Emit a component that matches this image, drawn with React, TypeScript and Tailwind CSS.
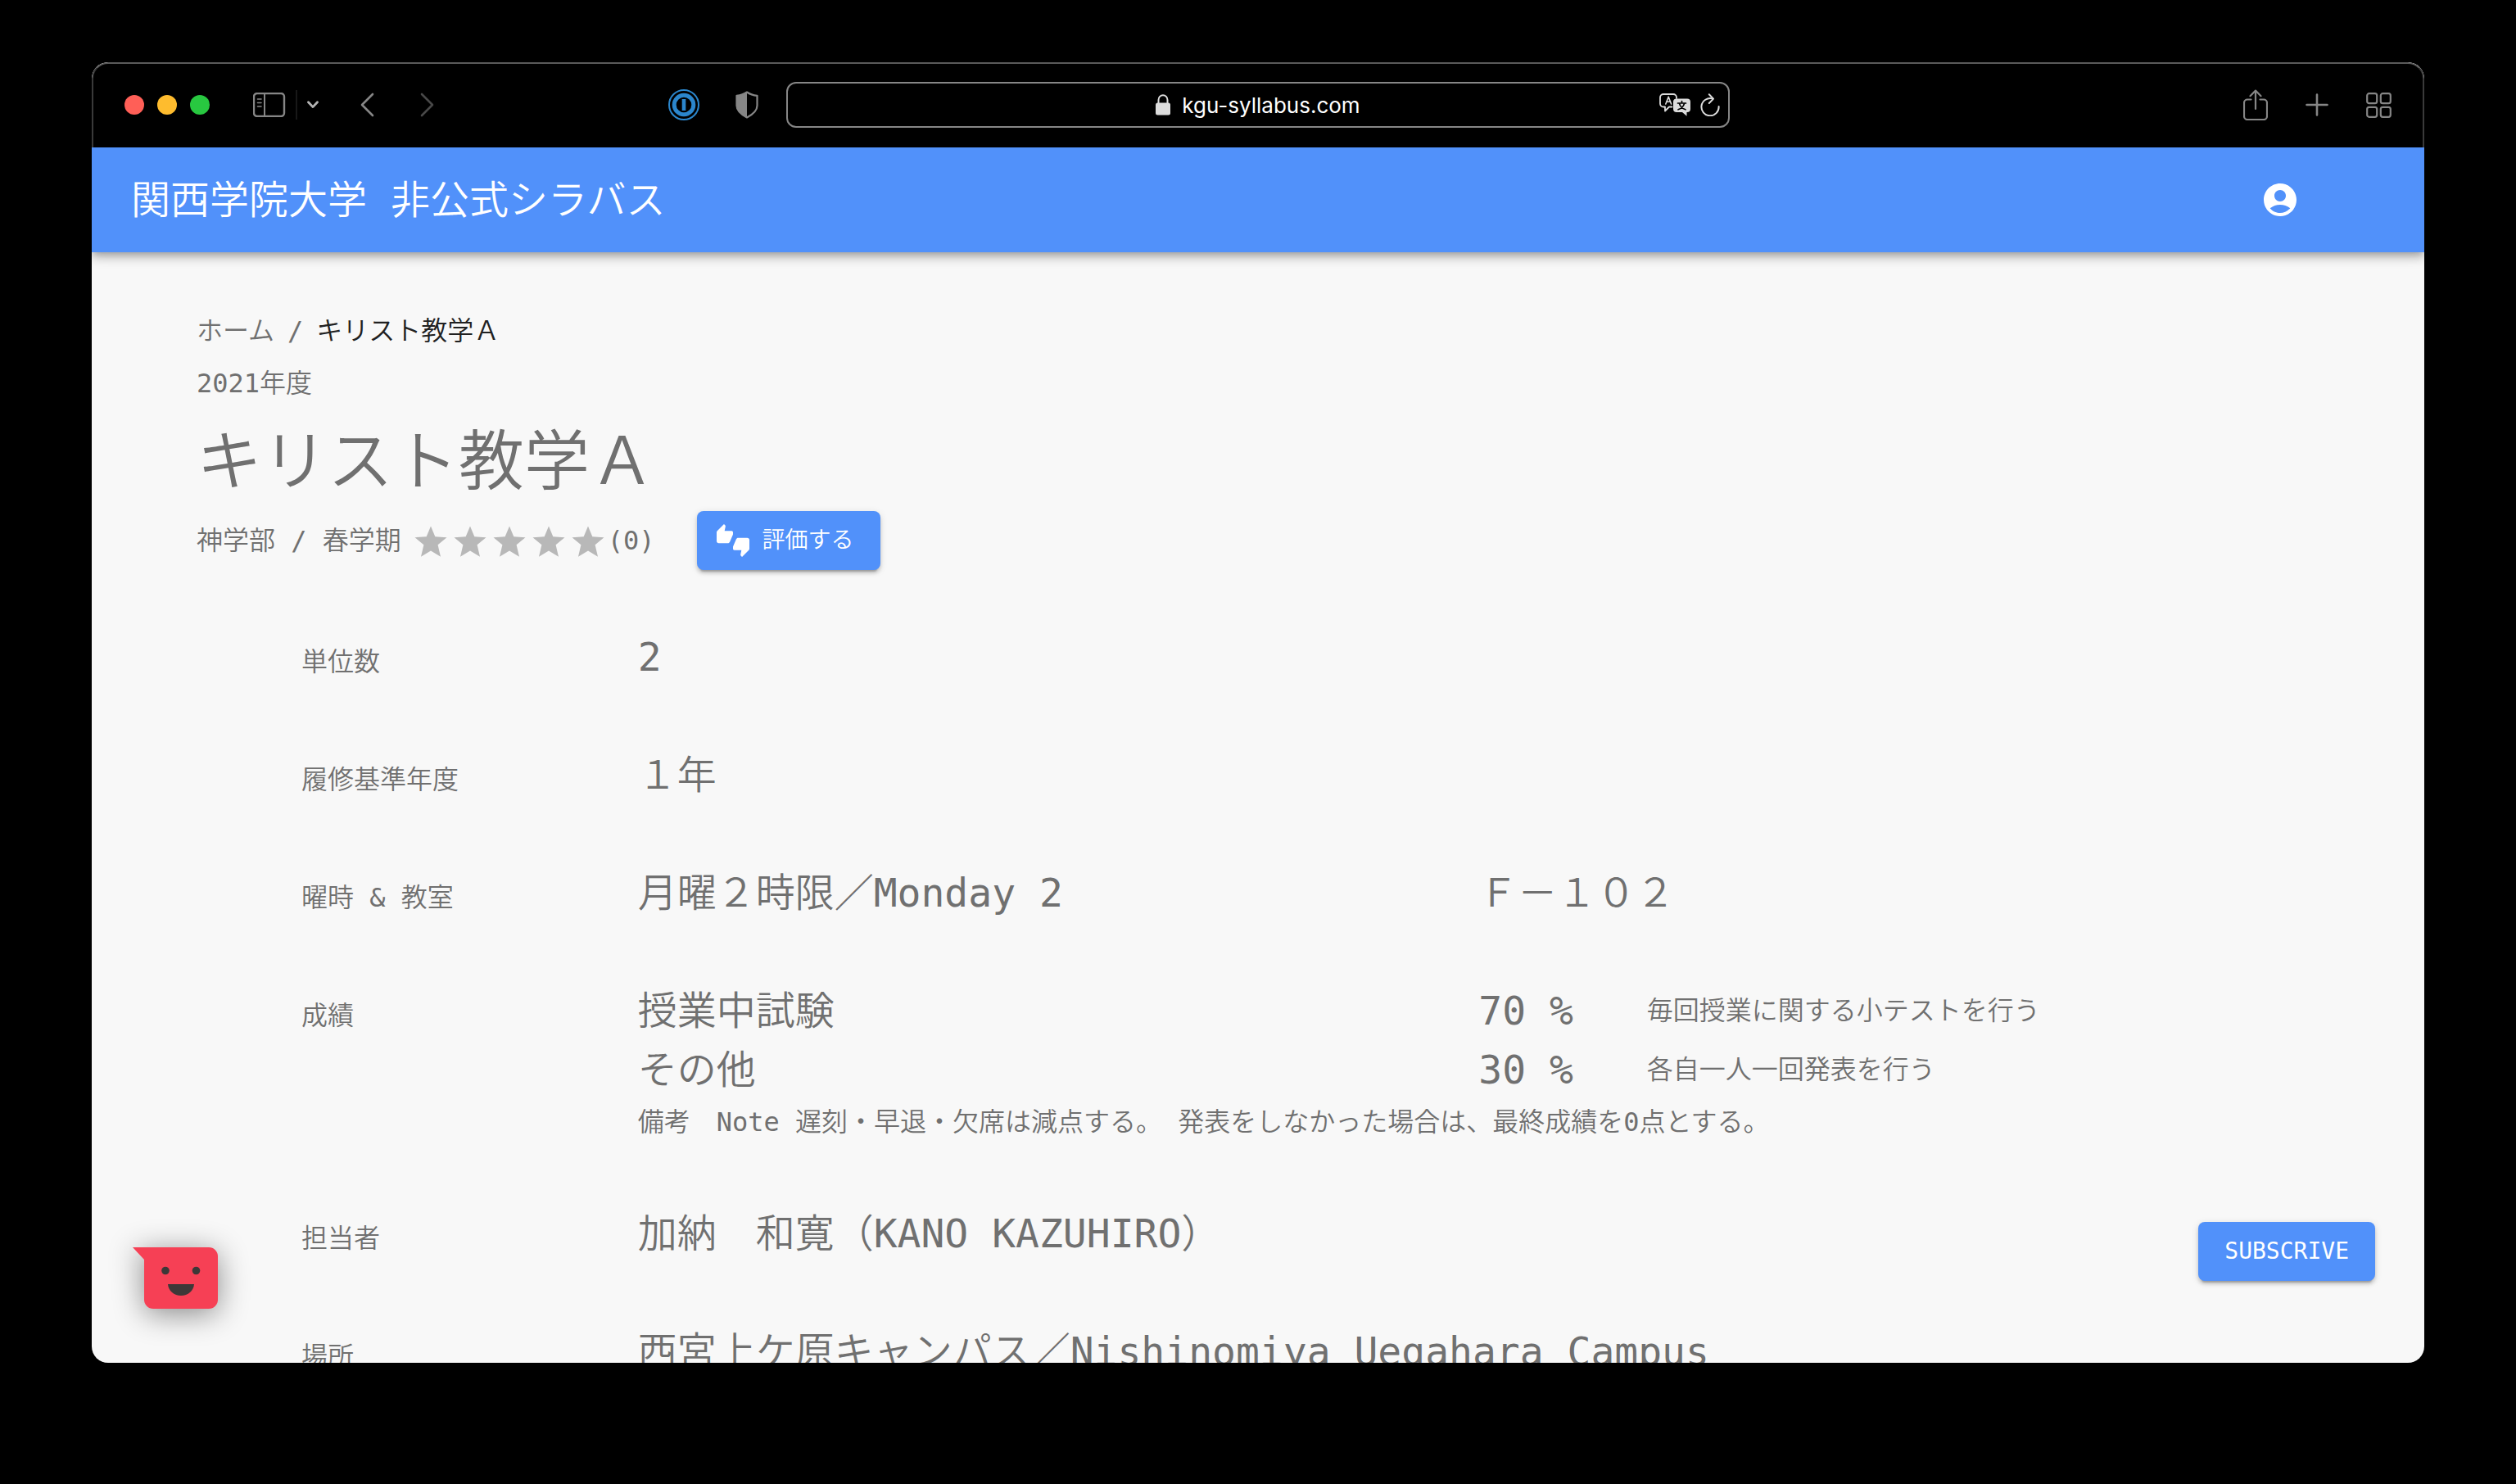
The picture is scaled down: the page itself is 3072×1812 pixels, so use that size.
import type { ReactNode } from "react";
import { MdAccountCircle, MdThumbsUpDown } from "react-icons/md";

const MONO = "font-['DejaVu_Sans_Mono','Noto_Sans_CJK_JP',monospace]";

function TrafficLights() {
  return (
    <div className="flex gap-4">
      <button aria-label="Close" className="size-6 rounded-full bg-[#ff5f57]" />
      <button aria-label="Minimize" className="size-6 rounded-full bg-[#febc2e]" />
      <button aria-label="Zoom" className="size-6 rounded-full bg-[#28c840]" />
    </div>
  );
}

function SidebarIcon() {
  return (
    <svg width="40" height="30" viewBox="0 0 40 30" fill="none" stroke="#868686">
      <rect x="1" y="1" width="37" height="28" rx="4" strokeWidth="2.4" />
      <path d="M14 1v28" strokeWidth="2" />
      <path d="M5.5 8h4.5M5.5 12.5h4.5M5.5 17h4.5" strokeWidth="1.6" strokeLinecap="round" />
    </svg>
  );
}

function OnePasswordIcon() {
  return (
    <svg width="38" height="38" viewBox="0 0 38 38" fill="none" stroke="#2b86cc">
      <circle cx="19" cy="19" r="18" strokeWidth="2" />
      <circle cx="19" cy="19" r="11.8" strokeWidth="5" />
      <path d="M19 12v14" strokeWidth="4.6" />
    </svg>
  );
}

function ShieldIcon() {
  return (
    <svg width="28" height="34" viewBox="0 0 28 34">
      <path
        d="M14 1.5c3.5 2.5 7.5 3.9 12.5 4.3V18c0 6.5-5 10.5-12.5 14.5C6.5 28.5 1.5 24.5 1.5 18V5.8C6.5 5.4 10.5 4 14 1.5z"
        fill="none"
        stroke="#868686"
        strokeWidth="2.2"
        strokeLinejoin="round"
      />
      <path d="M14 1.5v31C6.5 28.5 1.5 24.5 1.5 18V5.8C6.5 5.4 10.5 4 14 1.5z" fill="#868686" />
    </svg>
  );
}

function LockIcon() {
  return (
    <svg width="18" height="26" viewBox="0 0 18 26">
      <rect x="0" y="10.5" width="18" height="15" rx="2.5" fill="#dcdcdc" />
      <path d="M3.5 11.5V7a5.5 5.8 0 0 1 11 0v4.5" fill="none" stroke="#dcdcdc" strokeWidth="2" />
    </svg>
  );
}

function TranslateIcon() {
  return (
    <svg width="38" height="28" viewBox="0 0 38 28" fill="none" strokeLinejoin="round" strokeLinecap="round">
      <path
        d="M15.5 16.5H12l-5 5v-5H5a4 4 0 0 1-4-4V5a4 4 0 0 1 4-4h12a4 4 0 0 1 4 4v1"
        stroke="#dcdcdc"
        strokeWidth="1.8"
      />
      <path d="M7.8 13L11.2 4.2 14.6 13M9 10.2h4.4" stroke="#dcdcdc" strokeWidth="1.6" />
      <path
        d="M21 6.5h13a4 4 0 0 1 4 4V19a4 4 0 0 1-4 4h-.5v4.8L28 23h-7a4 4 0 0 1-4-4v-8.5a4 4 0 0 1 4-4z"
        fill="#dcdcdc"
      />
      <path
        d="M27.5 9.5v2.2M22.5 12h10M24.5 12.5c1 3.5 3.5 6 7.5 7.3M30.500 12.5c-1 3.5-3.5 6-7.5 7.3"
        stroke="#000"
        strokeWidth="1.7"
      />
    </svg>
  );
}

function ReloadIcon() {
  return (
    <svg width="24" height="28" viewBox="0 0 24 28" fill="none" stroke="#dcdcdc" strokeWidth="2" strokeLinecap="round" strokeLinejoin="round">
      <path d="M14.8 6.4A10.6 10.6 0 1 0 22.6 16" />
      <path d="M10.8 1.2l5.2 5.4-5.2 5.4" />
    </svg>
  );
}

function BrowserBar() {
  return (
    <div className="grid h-[104px] shrink-0 grid-cols-[1fr_1152px_1fr] items-center rounded-t-[20px] border-2 border-b-0 border-[#3a3a3a] border-t-[#5a5a5a] bg-black pb-0.5">
      <div className="flex items-center pl-[38px]">
        <TrafficLights />
        <button aria-label="Sidebar" className="ml-[53px]">
          <SidebarIcon />
        </button>
        <div className="ml-3 h-9 w-0.5 bg-[#181818]" />
        <button aria-label="Tab groups" className="ml-3">
          <svg width="14" height="10" viewBox="0 0 14 10" fill="none" stroke="#b4b4b4" strokeWidth="2.8" strokeLinecap="round" strokeLinejoin="round">
            <path d="M1.5 1.8L7 7.6l5.5-5.8" />
          </svg>
        </button>
        <button aria-label="Back" className="ml-[51px]">
          <svg width="17" height="30" viewBox="0 0 17 30" fill="none" stroke="#868686" strokeWidth="2.6" strokeLinecap="round" strokeLinejoin="round">
            <path d="M15 2L2 15l13 13" />
          </svg>
        </button>
        <button aria-label="Forward" className="ml-14">
          <svg width="17" height="30" viewBox="0 0 17 30" fill="none" stroke="#484848" strokeWidth="2.6" strokeLinecap="round" strokeLinejoin="round">
            <path d="M2 2l13 13L2 28" />
          </svg>
        </button>
        <button aria-label="1Password" className="ml-auto">
          <OnePasswordIcon />
        </button>
        <button aria-label="Privacy report" className="mr-[34px] ml-11">
          <ShieldIcon />
        </button>
      </div>
      <div className="grid h-14 grid-cols-[1fr_auto_1fr] items-center rounded-xl border-2 border-[#868686]">
        <span />
        <div className="flex items-center gap-3.5 font-['Inter',sans-serif] text-[26px] text-white">
          <LockIcon />
          <span>kgu-syllabus.com</span>
        </div>
        <div className="flex items-center justify-end gap-3 pr-2.5">
          <button aria-label="Translate">
            <TranslateIcon />
          </button>
          <button aria-label="Reload">
            <ReloadIcon />
          </button>
        </div>
      </div>
      <div className="flex items-center justify-end gap-[46px] pr-[38px]">
        <button aria-label="Share">
          <svg width="30" height="38" viewBox="0 0 30 38" fill="none" stroke="#868686" strokeWidth="2.2" strokeLinecap="round" strokeLinejoin="round">
            <path d="M9.5 12.5H5a4 4 0 0 0-4 4V33a4 4 0 0 0 4 4h20a4 4 0 0 0 4-4V16.5a4 4 0 0 0-4-4h-4.5M15 24V2M8.5 8.2L15 1.6l6.5 6.6" />
          </svg>
        </button>
        <button aria-label="New tab">
          <svg width="28" height="28" viewBox="0 0 28 28" fill="none" stroke="#868686" strokeWidth="2.6" strokeLinecap="round">
            <path d="M14 1.5v25M1.5 14h25" />
          </svg>
        </button>
        <button aria-label="Tab overview">
          <svg width="31" height="31" viewBox="0 0 31 31" fill="none" stroke="#868686" strokeWidth="2.2">
            <rect x="1.2" y="1.2" width="12" height="12" rx="2.5" />
            <rect x="17.8" y="1.2" width="12" height="12" rx="2.5" />
            <rect x="1.2" y="17.8" width="12" height="12" rx="2.5" />
            <rect x="17.8" y="17.8" width="12" height="12" rx="2.5" />
          </svg>
        </button>
      </div>
    </div>
  );
}

function SiteHeader() {
  return (
    <header className="relative z-10 flex h-32 shrink-0 items-center justify-between bg-[#5191fa] pr-32 pl-12 text-white shadow-[0_4px_8px_-2px_rgba(0,0,0,0.2),0_8px_10px_0_rgba(0,0,0,0.14),0_2px_20px_0_rgba(0,0,0,0.12)]">
      <a href="#" className="text-5xl font-[350]">
        関西学院大学 非公式シラバス
      </a>
      <button aria-label="アカウント" className="p-6">
        <MdAccountCircle className="size-12" />
      </button>
    </header>
  );
}

function Rating() {
  return (
    <div role="img" aria-label="評価 0" className="flex">
      {[1, 2, 3, 4, 5].map((n) => (
        <svg key={n} width="48" height="48" viewBox="0 0 48 48" fill="#b8b8b8">
          <path d="M24 6.5l5.300 12.7 14.2 1-10.9 9.1 3.4 14.4L24 36.6 12 43.7l3.4-14.4L4.5 20.2l14.2-1z" />
        </svg>
      ))}
    </div>
  );
}

function Row({ label, children }: { label: string; children: ReactNode }) {
  return (
    <div className="grid grid-cols-12 items-baseline">
      <dt className="col-span-2 leading-12">{label}</dt>
      <dd className="col-span-10 grid grid-cols-10 items-center text-5xl leading-[72px]">{children}</dd>
    </div>
  );
}

function Grade({ name, percent, note }: { name: string; percent: string; note: string }) {
  return (
    <>
      <span className="col-span-5">{name}</span>
      <span className="col-span-1 whitespace-nowrap">{percent}</span>
      <span className="col-span-4 text-[32px] leading-12">{note}</span>
    </>
  );
}

function ChatFace() {
  return (
    <button aria-label="フィードバック" className="absolute bottom-[66px] left-[50px]">
      <svg width="104" height="75" viewBox="0 0 104 75" className="overflow-visible drop-shadow-[0_6px_18px_rgba(0,0,0,0.45)]">
        <path d="M0 0h93a11 11 0 0 1 11 11v53a11 11 0 0 1-11 11H25a11 11 0 0 1-11-11V15z" fill="#f64055" />
        <circle cx="40" cy="28.5" r="4.8" fill="#3d3838" />
        <circle cx="77.5" cy="28.5" r="4.8" fill="#3d3838" />
        <path d="M43 45h32c-.5 8-7.5 14-16 14s-15.5-6-16-14z" fill="#3d3838" />
      </svg>
    </button>
  );
}

const raised =
  "h-[72px] rounded-lg bg-[#5191fa] px-8 text-[28px] text-white shadow-[0_6px_2px_-4px_rgba(0,0,0,0.2),0_4px_4px_0_rgba(0,0,0,0.14),0_2px_10px_0_rgba(0,0,0,0.12)]";

export default function App() {
  return (
    <div className={`h-screen bg-black px-28 pt-[76px] pb-[148px] ${MONO}`}>
      <div className="relative flex h-full flex-col overflow-hidden rounded-[20px] bg-[#f8f8f8]">
        <BrowserBar />
        <SiteHeader />
        <main className="min-h-0 flex-1 overflow-hidden px-32 pt-[72px] text-[32px] leading-12 font-[350] text-[#707070]">
          <nav aria-label="パンくず" className="flex gap-4">
            <a href="#">ホーム</a>
            <span>/</span>
            <a href="#" aria-current="page" className="text-[#212121]">
              キリスト教学Ａ
            </a>
          </nav>
          <p className="mt-4">2021年度</p>
          <h1 className="mt-6 text-[80px] leading-[96px]">キリスト教学Ａ</h1>
          <div className="mt-3 flex items-center">
            <span>神学部 / 春学期</span>
            <div className="ml-3 flex items-center">
              <Rating />
              <span>(0)</span>
            </div>
            <button className={`ml-[51px] flex items-center gap-4 pl-6 ${raised}`}>
              <MdThumbsUpDown className="size-10" />
              評価する
            </button>
          </div>
          <dl className="mt-[70px] flex flex-col gap-[72px] pl-32">
            <Row label="単位数">
              <span className="col-span-10">2</span>
            </Row>
            <Row label="履修基準年度">
              <span className="col-span-10">１年</span>
            </Row>
            <Row label="曜時 & 教室">
              <span className="col-span-5">月曜２時限／Monday 2</span>
              <span className="col-span-5">Ｆ－１０２</span>
            </Row>
            <Row label="成績">
              <Grade name="授業中試験" percent="70 %" note="毎回授業に関する小テストを行う" />
              <Grade name="その他" percent="30 %" note="各自一人一回発表を行う" />
              <span className="col-span-10 text-[32px] leading-14">
                備考　Note 遅刻・早退・欠席は減点する。 発表をしなかった場合は、最終成績を0点とする。
              </span>
            </Row>
            <Row label="担当者">
              <span className="col-span-10">加納　和寛（KANO KAZUHIRO）</span>
            </Row>
            <Row label="場所">
              <span className="col-span-10">西宮上ケ原キャンパス／Nishinomiya Uegahara Campus</span>
            </Row>
          </dl>
        </main>
        <ChatFace />
        <button className={`absolute right-[60px] bottom-[100px] ${raised}`}>SUBSCRIVE</button>
      </div>
    </div>
  );
}
